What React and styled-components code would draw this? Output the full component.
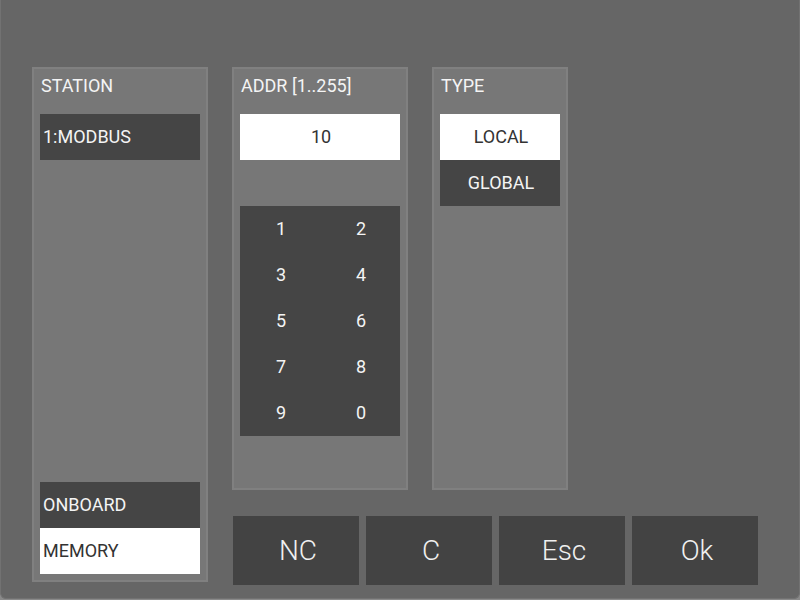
import styled, { createGlobalStyle } from 'styled-components';

const Global = createGlobalStyle`
  html, body {
    margin: 0;
    padding: 0;
    background: #8a8a8a;
  }
  body {
    font-family: Roboto, "Liberation Sans", sans-serif;
  }
`;

const Frame = styled.div`
  box-sizing: border-box;
  width: 800px;
  height: 599px;
  background: #666666;
  border: 1px solid #727272;
  border-top: none;
  border-radius: 0 0 6px 6px;
  padding: 67px 0 0 31px;
  display: grid;
  grid-template-columns: 176px auto;
  column-gap: 24px;
  align-items: start;
`;

const Panel = styled.section`
  box-sizing: border-box;
  width: ${(p) => p.width}px;
  height: ${(p) => p.height}px;
  background: #777777;
  border: 2px solid #808080;
  padding: 0 6px 6px;
  display: flex;
  flex-direction: column;
`;

const Title = styled.div`
  height: 33px;
  line-height: 33px;
  margin-bottom: 12px;
  padding-left: 1px;
  font-size: 18px;
  color: #f4f4f4;
  white-space: nowrap;
`;

const Item = styled.div`
  box-sizing: border-box;
  height: 46px;
  line-height: 46px;
  font-size: 18px;
  padding-left: ${(p) => (p.center ? 2 : 3)}px;
  text-align: ${(p) => (p.center ? 'center' : 'left')};
  background: ${(p) => (p.active ? '#ffffff' : '#454545')};
  color: ${(p) => (p.active ? '#333333' : '#f4f4f4')};
`;

const Spacer = styled.div`
  flex: 1;
`;

const Right = styled.div`
  display: flex;
  flex-direction: column;
`;

const PanelRow = styled.div`
  display: flex;
  gap: 24px;
`;

const Keypad = styled.div`
  margin-top: 46px;
  display: grid;
  grid-template-columns: 80px 80px;
  grid-auto-rows: 46px;
  background: #454545;
`;

const Key = styled.div`
  font-size: 18px;
  color: #f4f4f4;
  padding: 0 0 2px 2px;
  display: flex;
  align-items: center;
  justify-content: center;
`;

const Buttons = styled.div`
  margin: 26px 0 0 1px;
  display: flex;
  gap: 7px;
`;

const Button = styled.button`
  width: 126px;
  height: 69px;
  border: none;
  padding: 0 0 0 4px;
  background: #434343;
  color: #f0f0f0;
  font-family: Roboto, "Liberation Sans", sans-serif;
  font-weight: 300;
  font-size: 28px;
`;

const keys = ['1', '2', '3', '4', '5', '6', '7', '8', '9', '0'];

export default function App() {
  return (
    <>
      <Global />
      <Frame>
        <Panel width={176} height={515}>
          <Title>STATION</Title>
          <Item>1:MODBUS</Item>
          <Spacer />
          <Item>ONBOARD</Item>
          <Item active>MEMORY</Item>
        </Panel>
        <Right>
          <PanelRow>
            <Panel width={176} height={423}>
              <Title>ADDR [1..255]</Title>
              <Item active center>10</Item>
              <Keypad>
                {keys.map((k) => (
                  <Key key={k}>{k}</Key>
                ))}
              </Keypad>
            </Panel>
            <Panel width={136} height={423}>
              <Title>TYPE</Title>
              <Item active center>LOCAL</Item>
              <Item center>GLOBAL</Item>
            </Panel>
          </PanelRow>
          <Buttons>
            <Button type="button">NC</Button>
            <Button type="button">C</Button>
            <Button type="button">Esc</Button>
            <Button type="button">Ok</Button>
          </Buttons>
        </Right>
      </Frame>
    </>
  );
}
